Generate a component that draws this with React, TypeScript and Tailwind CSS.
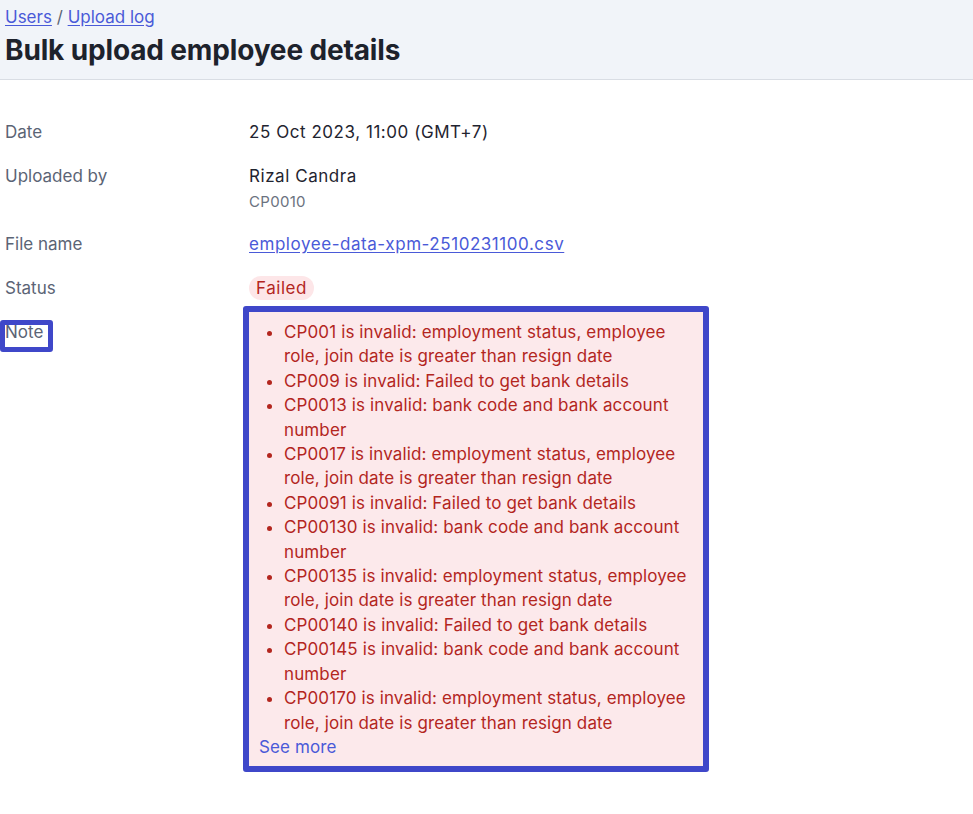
const notes = [
  "CP001 is invalid: employment status, employee role, join date is greater than resign date",
  "CP009 is invalid: Failed to get bank details",
  "CP0013 is invalid: bank code and bank account number",
  "CP0017 is invalid: employment status, employee role, join date is greater than resign date",
  "CP0091 is invalid: Failed to get bank details",
  "CP00130 is invalid: bank code and bank account number",
  "CP00135 is invalid: employment status, employee role, join date is greater than resign date",
  "CP00140 is invalid: Failed to get bank details",
  "CP00145 is invalid: bank code and bank account number",
  "CP00170 is invalid: employment status, employee role, join date is greater than resign date",
];

function Row({ label, children }: { label: React.ReactNode; children: React.ReactNode }) {
  return (
    <div className="flex">
      <div className="w-[244px] shrink-0 text-[#5b6475]">{label}</div>
      <div className="flex-1 tracking-[0.55px]">{children}</div>
    </div>
  );
}

export default function App() {
  return (
    <div className="min-h-screen bg-white font-['Inter',sans-serif] text-[17px] leading-6 text-[#1f2430]">
      <header className="h-20 border-b border-[#d9dde4] bg-[#f1f4f9] px-[5px] pt-[5px]">
        <nav className="text-[#4a5ad8]">
          <a href="#" className="underline underline-offset-2">Users</a>
          <span className="text-[#5b6475]"> / </span>
          <a href="#" className="underline underline-offset-2">Upload log</a>
        </nav>
        <h1 className="mt-[3px] text-[28px] font-bold leading-9 tracking-[-0.15px] text-[#1d222c]">
          Bulk upload employee details
        </h1>
      </header>

      <main className="flex flex-col gap-5 px-[5px] pt-10">
        <Row label="Date">25 Oct 2023, 11:00 (GMT+7)</Row>
        <Row label="Uploaded by">
          <div>Rizal Candra</div>
          <div className="mt-1 text-[15px] leading-5 tracking-[0.3px] text-[#6b7280]">CP0010</div>
        </Row>
        <Row label="File name">
          <a href="#" className="text-[#4a5ad8] underline underline-offset-2">
            employee-data-xpm-2510231100.csv
          </a>
        </Row>
        <Row label="Status">
          <span className="inline-block rounded-full bg-[#fde6e8] px-[7px] text-[#b3261e]">Failed</span>
        </Row>
        <div className="flex">
          <div className="w-[244px] shrink-0">
            {/* highlighted label */}
            <span className="relative inline-block text-[#5b6475]">
              Note
              <span className="absolute -left-[5px] top-0 h-8 w-[53px] rounded-[3px] border-[5px] border-[#3f47c9]" />
            </span>
          </div>
          <div className="-ml-[6px] -mt-[14px] w-[466px] rounded-[3px] border-[6px] border-[#3f47c9]">
            <div className="bg-[#fce9eb] px-[10px] pt-[8px] pb-[7px] leading-[24.4px] tracking-[0.12px] text-[#b3261e]">
              <ul className="list-disc pl-[25px]">
                {notes.map((n) => (
                  <li key={n}>{n}</li>
                ))}
              </ul>
              <a href="#" className="text-[#4a5ad8]">See more</a>
            </div>
          </div>
        </div>
      </main>
    </div>
  );
}
